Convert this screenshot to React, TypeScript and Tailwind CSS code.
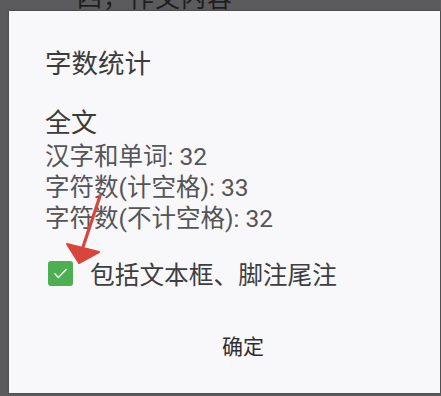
export default function App() {
  const cjk = { fontFamily: 'Roboto, "Noto Sans CJK SC", "Noto Sans", sans-serif' };

  return (
    <div
      className="relative w-[441px] h-[396px] overflow-hidden bg-[#5b5a5d] pt-[11px] pl-[9px]"
      style={cjk}
    >
      {/* page text behind the dialog */}
      <div className="absolute left-[77px] top-[-16px] text-[25px] leading-[30px] text-[#1e1e1e] tracking-[1px]">
        四，作文内容
      </div>

      <div className="relative flex flex-col h-[382px] w-[431px] bg-[#f8f7fa] pl-[36px] pt-[38px] shadow-[0_0_2px_rgba(0,0,0,0.4)]">
        <div className="text-[26.5px] leading-[30px] text-[#3c3c3c]">字数统计</div>

        <div className="mt-[29px] text-[26px] leading-[30px] text-[#3a3a3a]">全文</div>

        <div className="mt-[3px] flex flex-col text-[24.5px] leading-[31px] text-[#555457]">
          <div>汉字和单词: 32</div>
          <div>字符数(计空格): 33</div>
          <div>字符数(不计空格): 32</div>
        </div>

        <div className="mt-[24px] flex items-center h-[31px]">
          <div className="ml-[3px] flex items-center justify-center w-[25px] h-[25px] rounded-[3px] bg-[#4caf50]">
            <svg width="17" height="17" viewBox="0 0 24 24" fill="none">
              <path
                d="M4 12.5l5 5L20 6.5"
                stroke="#ffffff"
                strokeWidth="2"
                strokeLinecap="round"
                strokeLinejoin="round"
              />
            </svg>
          </div>
          <span className="ml-[17px] text-[24.7px] leading-[31px] text-[#3e3e3e] mt-[3px]">
            包括文本框、脚注尾注
          </span>
        </div>

        <div className="mt-[44px] flex justify-center pl-[1px]">
          <span className="text-[21px] leading-[28px] text-[#2e2e2e]">确定</span>
        </div>
      </div>

      {/* red annotation arrow */}
      <svg
        className="absolute left-0 top-0 pointer-events-none"
        width="441"
        height="396"
        viewBox="0 0 441 396"
      >
        <path d="M100 196 L82 250" stroke="#d8453a" strokeWidth="3.2" strokeLinecap="round" />
        <path d="M67 244 L79 263 L99 252 Z" fill="#d8453a" stroke="#d8453a" strokeWidth="2" strokeLinejoin="round" />
      </svg>
    </div>
  );
}
